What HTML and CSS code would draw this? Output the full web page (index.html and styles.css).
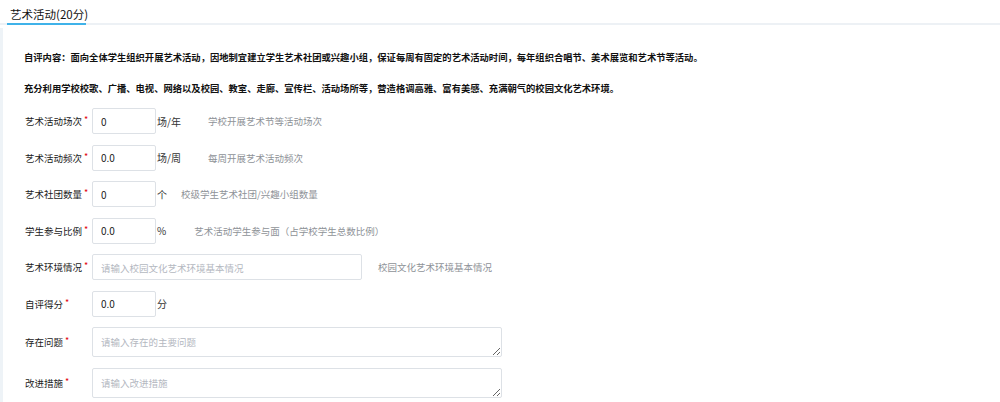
FILE: index.html
```html
<!DOCTYPE html>
<html lang="zh-CN">
<head>
    <meta charset="UTF-8">
    <meta name="viewport" content="width=device-width, initial-scale=1.0">
    <title>艺术活动自评</title>
    <link rel="stylesheet" href="styles.css">
</head>
<body>

    <!-- Tab header -->
    <div class="tabs">
        <span class="tab active">艺术活动(20分)</span>
    </div>

    <div class="panel">
        <p class="desc">自评内容：面向全体学生组织开展艺术活动，因地制宜建立学生艺术社团或兴趣小组，保证每周有固定的艺术活动时间，每年组织合唱节、美术展览和艺术节等活动。</p>
        <p class="desc">充分利用学校校歌、广播、电视、网络以及校园、教室、走廊、宣传栏、活动场所等，营造格调高雅、富有美感、充满朝气的校园文化艺术环境。</p>

        <form class="form">
            <div class="row">
                <label class="label">艺术活动场次<i>*</i></label>
                <input class="field" type="text" value="0">
                <span class="unit">场/年</span>
                <span class="hint hint-a">学校开展艺术节等活动场次</span>
            </div>
            <div class="row">
                <label class="label">艺术活动频次<i>*</i></label>
                <input class="field" type="text" value="0.0">
                <span class="unit">场/周</span>
                <span class="hint hint-a">每周开展艺术活动频次</span>
            </div>
            <div class="row">
                <label class="label">艺术社团数量<i>*</i></label>
                <input class="field" type="text" value="0">
                <span class="unit">个</span>
                <span class="hint hint-b">校级学生艺术社团/兴趣小组数量</span>
            </div>
            <div class="row">
                <label class="label">学生参与比例<i>*</i></label>
                <input class="field" type="text" value="0.0">
                <span class="unit">%</span>
                <span class="hint hint-c">艺术活动学生参与面（占学校学生总数比例）</span>
            </div>
            <div class="row">
                <label class="label">艺术环境情况<i>*</i></label>
                <input class="field field-wide" type="text" placeholder="请输入校园文化艺术环境基本情况">
                <span class="hint hint-d">校园文化艺术环境基本情况</span>
            </div>
            <div class="row">
                <label class="label">自评得分<i>*</i></label>
                <input class="field" type="text" value="0.0">
                <span class="unit">分</span>
            </div>
            <div class="row">
                <label class="label">存在问题<i>*</i></label>
                <textarea class="area" placeholder="请输入存在的主要问题"></textarea>
            </div>
            <div class="row">
                <label class="label">改进措施<i>*</i></label>
                <textarea class="area" placeholder="请输入改进措施"></textarea>
            </div>
        </form>
    </div>

</body>
</html>
```

FILE: styles.css
```css
body {
    margin: 0;
    font-family: "Noto Sans CJK SC", "Liberation Sans", sans-serif;
    color: #333;
    background: #fff;
}
/* Tab header */
.tabs {
    height: 23px;
    padding-left: 7px;
    border-bottom: 2px solid #edf1f5;
}
.tab {
    display: inline-block;
    height: 23px;
    width: 79px;
    padding-left: 3px;
    box-sizing: border-box;
    font-size: 11.5px;
    line-height: 25px;
    white-space: nowrap;
    color: #111;
    border-bottom: 2px solid #3fb2e9;
}
/* Content */
.panel {
    margin-top: 3px;
    border-left: 3px solid #eef3f7;
    padding: 24px 0 6px 21px;
}
.desc {
    margin: 0 0 20px;
    font-size: 9.3px;
    line-height: 11px;
    font-weight: bold;
    color: #111;
}
.desc + .desc {
    margin-bottom: 14px;
}
.form {
    display: flex;
    flex-direction: column;
    gap: 10.5px;
}
.row {
    display: flex;
    align-items: center;
}
.label {
    width: 68px;
    padding-left: 1px;
    box-sizing: border-box;
    font-size: 9.5px;
    color: #1a1a1a;
    white-space: nowrap;
}
.label i {
    font-style: normal;
    color: #e3000b;
    font-size: 9px;
    position: relative;
    top: -2px;
    margin-left: 2px;
}
.field {
    width: 64px;
    height: 26px;
    box-sizing: border-box;
    border: 1px solid #dde1e6;
    border-radius: 2px;
    padding: 0 8px;
    font-family: inherit;
    font-size: 10px;
    color: #222;
    outline: none;
}
.field-wide {
    width: 270px;
}
.field::placeholder,
.area::placeholder {
    color: #b4b8bf;
    font-size: 9.5px;
}
.area {
    width: 410px;
    height: 30px;
    box-sizing: border-box;
    border: 1px solid #dde1e6;
    border-radius: 2px;
    padding: 7px 8px;
    font-family: inherit;
    font-size: 9.5px;
    color: #333;
    outline: none;
}
.unit {
    margin-left: 1px;
    font-size: 10px;
    color: #333;
}
.hint {
    font-size: 9.5px;
    color: #8e9297;
}
.hint-a {
    margin-left: 27px;
}
.hint-b {
    margin-left: 14px;
}
.hint-c {
    margin-left: 28px;
}
.hint-d {
    margin-left: 16px;
}
```
